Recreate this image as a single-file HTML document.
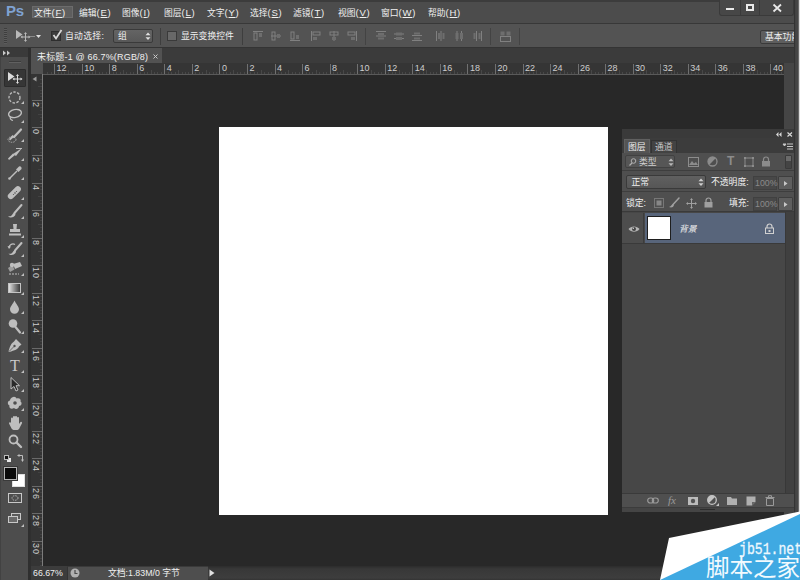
<!DOCTYPE html>
<html><head><meta charset="utf-8"><title>Photoshop</title>
<style>
*{margin:0;padding:0;box-sizing:border-box}
html,body{width:800px;height:580px;overflow:hidden;background:#282828}
body{position:relative;font-family:"Liberation Sans","Noto Sans CJK SC",sans-serif;font-size:8.8px;color:#f0f0f0}
.a{position:absolute}
.l{letter-spacing:0.7px;font-size:9.5px}
.t{position:absolute;white-space:nowrap;line-height:12px;height:12px}
.rl{font-size:9px;line-height:8px;height:8px;color:#cdcdcd}
.rv{writing-mode:vertical-rl;width:8px;height:auto;letter-spacing:1px}
svg{position:absolute;overflow:visible}
#menubar{left:0;top:0;width:800px;height:23px;background:#4c4c4c;border-top:2px solid #3c3c3c}
#optbar{left:0;top:23px;width:800px;height:25px;background:#535353;border-top:1px solid #383838;border-bottom:1px solid #343434}
#tabbar{left:31px;top:48px;width:769px;height:15px;background:#3b3b3b}
#tab{left:31px;top:48px;width:131px;height:15px;background:#525252}
#toolbar{left:0;top:48px;width:28px;height:532px;background:#4d4d4d;border-left:1px solid #424242}
#tbhead{left:0;top:48px;width:28px;height:9px;background:#3a3a3a}
#tbedge{left:28px;top:48px;width:3px;height:532px;background:#2f2f2f}
#rulert{left:31px;top:63px;width:753px;height:12px;background:#353535;border-bottom:1px solid #5a5a5a}
#rulerl{left:31px;top:63px;width:12px;height:503px;background:#343434;border-right:1px solid #7c7c7c}
#rcorner{left:31px;top:62px;width:12px;height:12px;background:#525252}
#doc{left:219px;top:127px;width:389px;height:388px;background:#fff}
#rightcol{left:784px;top:63px;width:10px;height:517px;background:#454545}
#frame{left:794px;top:0;width:6px;height:580px;background:linear-gradient(90deg,#333 0 1px,#424242 1px 2px,#454545 2px 4px,#6a6a6a 4px 5px,#dcdcdc 5px 6px)}
#status{left:31px;top:566px;width:753px;height:14px;background:linear-gradient(#2c2c2c 0,#383838 3px,#3d3d3d 12px,#343434 14px)}
#panel{left:622px;top:129px;width:172px;height:383px;background:#4b4b4b}
</style></head><body>
<div class="a" id="doc"></div>
<div class="a" id="menubar"></div>
<div class="a" id="optbar"></div>
<div class="a" id="tabbar"></div>
<div class="a" id="tab"></div>
<div class="a" id="rulert"></div>
<div class="a" id="rulerl"></div>
<div class="a" id="rcorner"></div>
<div class="a" id="rightcol"></div>
<div class="a" id="status"></div>
<div class="a" id="toolbar"></div>
<div class="a" id="tbhead"></div>
<div class="a" id="tbedge"></div>
<div class="t" style="left:6px;top:3px;font-size:15px;font-weight:bold;color:#7fa2d2;line-height:16px;height:16px;letter-spacing:-0.3px">Ps</div>
<div class="a" style="left:32px;top:6px;width:41px;height:12px;background:#5e5e5e;border:1px solid #6c6c6c"></div>
<div class="t" style="left:34px;top:7px">文件<span class="l">(<u>F</u>)</span></div>
<div class="t" style="left:79px;top:7px">编辑<span class="l">(<u>E</u>)</span></div>
<div class="t" style="left:122px;top:7px">图像<span class="l">(<u>I</u>)</span></div>
<div class="t" style="left:164px;top:7px">图层<span class="l">(<u>L</u>)</span></div>
<div class="t" style="left:207px;top:7px">文字<span class="l">(<u>Y</u>)</span></div>
<div class="t" style="left:250px;top:7px">选择<span class="l">(<u>S</u>)</span></div>
<div class="t" style="left:293px;top:7px">滤镜<span class="l">(<u>T</u>)</span></div>
<div class="t" style="left:338px;top:7px">视图<span class="l">(<u>V</u>)</span></div>
<div class="t" style="left:381px;top:7px">窗口<span class="l">(<u>W</u>)</span></div>
<div class="t" style="left:428px;top:7px">帮助<span class="l">(<u>H</u>)</span></div>
<div class="a" style="left:719px;top:0;width:75px;height:16px;background:#474747;border:1px solid #3a3a3a;border-top:none;border-radius:0 0 3px 3px"></div>
<div class="a" style="left:740px;top:0;width:1px;height:15px;background:#3a3a3a"></div>
<div class="a" style="left:759px;top:0;width:1px;height:15px;background:#3a3a3a"></div>
<div class="a" style="left:726px;top:8px;width:8px;height:2px;background:#e8e8e8"></div>
<div class="a" style="left:746px;top:4px;width:8px;height:7px;border:2px solid #e8e8e8;border-width:2px 2px 2px 2px"></div>
<svg style="left:773px;top:4px" width="9" height="8"><path d="M0.500 0.500L8 7.500M8 0.500L0.500 7.500" stroke="#e8e8e8" stroke-width="1.8" fill="none"/></svg>
<div class="a" style="left:4px;top:28px;width:3px;height:16px;background:repeating-linear-gradient(#3e3e3e 0 1px,#5c5c5c 1px 2px)"></div>
<svg style="left:16px;top:30px" width="16" height="12"><path d="M0 0L0 9L6.5 4.5Z" fill="#b8b8b8"/><path d="M9.5 3V11M5.5 7H13.5" stroke="#b8b8b8" stroke-width="1" fill="none"/><path d="M9.5 2L8 4H11ZM9.5 12L8 10H11ZM4.5 7L6.5 5.5V8.5ZM14.5 7L12.5 5.5V8.5Z" fill="#b8b8b8"/></svg>
<div class="a" style="left:30px;top:36px;width:5px;height:1px;background:#8a8a8a"></div>
<svg style="left:36px;top:35px" width="6" height="4"><path d="M0 0H5L2.5 3Z" fill="#e0e0e0"/></svg>
<div class="a" style="left:51px;top:31px;width:10px;height:10px;background:#3c3c3c;border:1px solid #2e2e2e"></div>
<svg style="left:51px;top:28px" width="13" height="13"><path d="M2.5 7L5 10.5L10.5 2" stroke="#d8d8d8" stroke-width="1.8" fill="none"/></svg>
<div class="t" style="left:65px;top:30px;letter-spacing:0.3px">自动选择:</div>
<div class="a" style="left:113px;top:29px;width:40px;height:14px;background:linear-gradient(#646464,#585858);border:1px solid #3a3a3a;border-radius:2px"></div>
<div class="t" style="left:118px;top:30px">组</div>
<svg style="left:145px;top:32px" width="6" height="9"><path d="M0.5 3.2H5.5L3 0.5ZM0.5 5.2H5.5L3 8Z" fill="#e0e0e0"/></svg>
<div class="a" style="left:160px;top:28px;width:1px;height:17px;background:#3e3e3e"></div>
<div class="a" style="left:167px;top:31px;width:10px;height:10px;background:#686868;border:1px solid #3a3a3a"></div>
<div class="t" style="left:181px;top:30px">显示变换控件</div>
<div class="a" style="left:242px;top:28px;width:1px;height:17px;background:#3e3e3e"></div>
<svg style="left:253px;top:30.5px" width="10" height="10"><path d="M0 0.5H10" stroke="#808080"/><rect x="1" y="2" width="3" height="7" fill="none" stroke="#808080"/><rect x="6" y="2" width="3" height="4" fill="#6e6e6e"/></svg>
<svg style="left:271px;top:30.5px" width="10" height="10"><path d="M0 5H10" stroke="#808080"/><rect x="1" y="1" width="3" height="8" fill="none" stroke="#808080"/><rect x="6" y="3" width="3" height="4" fill="#6e6e6e"/></svg>
<svg style="left:290px;top:30.5px" width="10" height="10"><path d="M0 9.5H10" stroke="#808080"/><rect x="1" y="1" width="3" height="7" fill="none" stroke="#808080"/><rect x="6" y="4" width="3" height="4" fill="#6e6e6e"/></svg>
<svg style="left:311px;top:30.5px" width="10" height="10"><path d="M0.5 0V10" stroke="#808080"/><rect x="2" y="1" width="7" height="3" fill="none" stroke="#808080"/><rect x="2" y="6" width="4" height="3" fill="#6e6e6e"/></svg>
<svg style="left:329px;top:30.5px" width="10" height="10"><path d="M5 0V10" stroke="#808080"/><rect x="1" y="1" width="8" height="3" fill="none" stroke="#808080"/><rect x="3" y="6" width="4" height="3" fill="#6e6e6e"/></svg>
<svg style="left:347px;top:30.5px" width="10" height="10"><path d="M9.5 0V10" stroke="#808080"/><rect x="1" y="1" width="7" height="3" fill="none" stroke="#808080"/><rect x="4" y="6" width="4" height="3" fill="#6e6e6e"/></svg>
<svg style="left:376px;top:30.5px" width="10" height="10"><path d="M0 0.5H10M0 5H10" stroke="#808080"/><rect x="2" y="2" width="6" height="2" fill="#6e6e6e"/><rect x="2" y="6.5" width="6" height="2" fill="#6e6e6e"/></svg>
<svg style="left:394px;top:30.5px" width="10" height="10"><path d="M0 3H10M0 7.5H10" stroke="#808080"/><rect x="2" y="1.5" width="6" height="3" fill="#6e6e6e"/><rect x="2" y="6" width="6" height="3" fill="#6e6e6e"/></svg>
<svg style="left:412px;top:30.5px" width="10" height="10"><path d="M0 4.5H10M0 9.5H10" stroke="#808080"/><rect x="2" y="1.5" width="6" height="2" fill="#6e6e6e"/><rect x="2" y="6.5" width="6" height="2" fill="#6e6e6e"/></svg>
<svg style="left:436px;top:30.5px" width="10" height="10"><path d="M0.5 0V10M5 0V10" stroke="#808080"/><rect x="2" y="2" width="2" height="6" fill="#6e6e6e"/><rect x="6.5" y="2" width="2" height="6" fill="#6e6e6e"/></svg>
<svg style="left:454px;top:30.5px" width="10" height="10"><path d="M3 0V10M7.5 0V10" stroke="#808080"/><rect x="1.5" y="2" width="3" height="6" fill="#6e6e6e"/><rect x="6" y="2" width="3" height="6" fill="#6e6e6e"/></svg>
<svg style="left:472px;top:30.5px" width="10" height="10"><path d="M4.5 0V10M9.5 0V10" stroke="#808080"/><rect x="1.5" y="2" width="2" height="6" fill="#6e6e6e"/><rect x="6.5" y="2" width="2" height="6" fill="#6e6e6e"/></svg>
<svg style="left:500px;top:30.5px" width="11" height="11"><rect x="0.5" y="0.5" width="4" height="4" fill="#6e6e6e"/><rect x="6.5" y="0.5" width="4" height="4" fill="#6e6e6e"/><rect x="0.5" y="5.5" width="10" height="5" fill="none" stroke="#808080"/></svg>
<div class="a" style="left:365px;top:28px;width:1px;height:17px;background:#434343"></div>
<div class="a" style="left:490px;top:28px;width:1px;height:17px;background:#434343"></div>
<div class="a" style="left:519px;top:28px;width:1px;height:17px;background:#434343"></div>
<div class="a" style="left:760px;top:30px;width:38px;height:14px;background:#5e5e5e;border:1px solid #3a3a3a;border-radius:2px 0 0 2px"></div>
<div class="t" style="left:765px;top:31px;width:29px;overflow:hidden">基本功能</div>
<div class="a" id="frame"></div>
<div class="t" style="left:37px;top:51px;font-size:9px;letter-spacing:0.17px">未标题-1 @ 66.7%(RGB/8)</div>
<svg style="left:153px;top:54px" width="5" height="5"><path d="M0.5 0.5L4.5 4.5M4.5 0.5L0.5 4.5" stroke="#c8c8c8" stroke-width="1" fill="none"/></svg>
<div class="a" style="left:47.2px;top:72px;width:1px;height:2px;background:#484848"></div>
<div class="a" style="left:50.7px;top:72px;width:1px;height:2px;background:#484848"></div>
<div class="a" style="left:54.1px;top:64px;width:1px;height:10px;background:#707070"></div>
<div class="t rl" style="left:56.6px;top:64px">12</div>
<div class="a" style="left:57.5px;top:72px;width:1px;height:2px;background:#484848"></div>
<div class="a" style="left:61.0px;top:72px;width:1px;height:2px;background:#484848"></div>
<div class="a" style="left:64.4px;top:72px;width:1px;height:2px;background:#484848"></div>
<div class="a" style="left:67.9px;top:70px;width:1px;height:4px;background:#484848"></div>
<div class="a" style="left:71.3px;top:72px;width:1px;height:2px;background:#484848"></div>
<div class="a" style="left:74.8px;top:72px;width:1px;height:2px;background:#484848"></div>
<div class="a" style="left:78.2px;top:72px;width:1px;height:2px;background:#484848"></div>
<div class="a" style="left:81.7px;top:64px;width:1px;height:10px;background:#707070"></div>
<div class="t rl" style="left:84.2px;top:64px">10</div>
<div class="a" style="left:85.1px;top:72px;width:1px;height:2px;background:#484848"></div>
<div class="a" style="left:88.5px;top:72px;width:1px;height:2px;background:#484848"></div>
<div class="a" style="left:92.0px;top:72px;width:1px;height:2px;background:#484848"></div>
<div class="a" style="left:95.4px;top:70px;width:1px;height:4px;background:#484848"></div>
<div class="a" style="left:98.9px;top:72px;width:1px;height:2px;background:#484848"></div>
<div class="a" style="left:102.3px;top:72px;width:1px;height:2px;background:#484848"></div>
<div class="a" style="left:105.8px;top:72px;width:1px;height:2px;background:#484848"></div>
<div class="a" style="left:109.2px;top:64px;width:1px;height:10px;background:#707070"></div>
<div class="t rl" style="left:111.7px;top:64px">8</div>
<div class="a" style="left:112.6px;top:72px;width:1px;height:2px;background:#484848"></div>
<div class="a" style="left:116.1px;top:72px;width:1px;height:2px;background:#484848"></div>
<div class="a" style="left:119.5px;top:72px;width:1px;height:2px;background:#484848"></div>
<div class="a" style="left:123.0px;top:70px;width:1px;height:4px;background:#484848"></div>
<div class="a" style="left:126.4px;top:72px;width:1px;height:2px;background:#484848"></div>
<div class="a" style="left:129.9px;top:72px;width:1px;height:2px;background:#484848"></div>
<div class="a" style="left:133.3px;top:72px;width:1px;height:2px;background:#484848"></div>
<div class="a" style="left:136.8px;top:64px;width:1px;height:10px;background:#707070"></div>
<div class="t rl" style="left:139.2px;top:64px">6</div>
<div class="a" style="left:140.2px;top:72px;width:1px;height:2px;background:#484848"></div>
<div class="a" style="left:143.6px;top:72px;width:1px;height:2px;background:#484848"></div>
<div class="a" style="left:147.1px;top:72px;width:1px;height:2px;background:#484848"></div>
<div class="a" style="left:150.5px;top:70px;width:1px;height:4px;background:#484848"></div>
<div class="a" style="left:154.0px;top:72px;width:1px;height:2px;background:#484848"></div>
<div class="a" style="left:157.4px;top:72px;width:1px;height:2px;background:#484848"></div>
<div class="a" style="left:160.9px;top:72px;width:1px;height:2px;background:#484848"></div>
<div class="a" style="left:164.3px;top:64px;width:1px;height:10px;background:#707070"></div>
<div class="t rl" style="left:166.8px;top:64px">4</div>
<div class="a" style="left:167.7px;top:72px;width:1px;height:2px;background:#484848"></div>
<div class="a" style="left:171.2px;top:72px;width:1px;height:2px;background:#484848"></div>
<div class="a" style="left:174.6px;top:72px;width:1px;height:2px;background:#484848"></div>
<div class="a" style="left:178.1px;top:70px;width:1px;height:4px;background:#484848"></div>
<div class="a" style="left:181.5px;top:72px;width:1px;height:2px;background:#484848"></div>
<div class="a" style="left:185.0px;top:72px;width:1px;height:2px;background:#484848"></div>
<div class="a" style="left:188.4px;top:72px;width:1px;height:2px;background:#484848"></div>
<div class="a" style="left:191.8px;top:64px;width:1px;height:10px;background:#707070"></div>
<div class="t rl" style="left:194.3px;top:64px">2</div>
<div class="a" style="left:195.3px;top:72px;width:1px;height:2px;background:#484848"></div>
<div class="a" style="left:198.7px;top:72px;width:1px;height:2px;background:#484848"></div>
<div class="a" style="left:202.2px;top:72px;width:1px;height:2px;background:#484848"></div>
<div class="a" style="left:205.6px;top:70px;width:1px;height:4px;background:#484848"></div>
<div class="a" style="left:209.1px;top:72px;width:1px;height:2px;background:#484848"></div>
<div class="a" style="left:212.5px;top:72px;width:1px;height:2px;background:#484848"></div>
<div class="a" style="left:216.0px;top:72px;width:1px;height:2px;background:#484848"></div>
<div class="a" style="left:219.4px;top:64px;width:1px;height:10px;background:#707070"></div>
<div class="t rl" style="left:221.9px;top:64px">0</div>
<div class="a" style="left:222.8px;top:72px;width:1px;height:2px;background:#484848"></div>
<div class="a" style="left:226.3px;top:72px;width:1px;height:2px;background:#484848"></div>
<div class="a" style="left:229.7px;top:72px;width:1px;height:2px;background:#484848"></div>
<div class="a" style="left:233.2px;top:70px;width:1px;height:4px;background:#484848"></div>
<div class="a" style="left:236.6px;top:72px;width:1px;height:2px;background:#484848"></div>
<div class="a" style="left:240.1px;top:72px;width:1px;height:2px;background:#484848"></div>
<div class="a" style="left:243.5px;top:72px;width:1px;height:2px;background:#484848"></div>
<div class="a" style="left:247.0px;top:64px;width:1px;height:10px;background:#707070"></div>
<div class="t rl" style="left:249.5px;top:64px">2</div>
<div class="a" style="left:250.4px;top:72px;width:1px;height:2px;background:#484848"></div>
<div class="a" style="left:253.8px;top:72px;width:1px;height:2px;background:#484848"></div>
<div class="a" style="left:257.3px;top:72px;width:1px;height:2px;background:#484848"></div>
<div class="a" style="left:260.7px;top:70px;width:1px;height:4px;background:#484848"></div>
<div class="a" style="left:264.2px;top:72px;width:1px;height:2px;background:#484848"></div>
<div class="a" style="left:267.6px;top:72px;width:1px;height:2px;background:#484848"></div>
<div class="a" style="left:271.1px;top:72px;width:1px;height:2px;background:#484848"></div>
<div class="a" style="left:274.5px;top:64px;width:1px;height:10px;background:#707070"></div>
<div class="t rl" style="left:277.0px;top:64px">4</div>
<div class="a" style="left:277.9px;top:72px;width:1px;height:2px;background:#484848"></div>
<div class="a" style="left:281.4px;top:72px;width:1px;height:2px;background:#484848"></div>
<div class="a" style="left:284.8px;top:72px;width:1px;height:2px;background:#484848"></div>
<div class="a" style="left:288.3px;top:70px;width:1px;height:4px;background:#484848"></div>
<div class="a" style="left:291.7px;top:72px;width:1px;height:2px;background:#484848"></div>
<div class="a" style="left:295.2px;top:72px;width:1px;height:2px;background:#484848"></div>
<div class="a" style="left:298.6px;top:72px;width:1px;height:2px;background:#484848"></div>
<div class="a" style="left:302.1px;top:64px;width:1px;height:10px;background:#707070"></div>
<div class="t rl" style="left:304.6px;top:64px">6</div>
<div class="a" style="left:305.5px;top:72px;width:1px;height:2px;background:#484848"></div>
<div class="a" style="left:308.9px;top:72px;width:1px;height:2px;background:#484848"></div>
<div class="a" style="left:312.4px;top:72px;width:1px;height:2px;background:#484848"></div>
<div class="a" style="left:315.8px;top:70px;width:1px;height:4px;background:#484848"></div>
<div class="a" style="left:319.3px;top:72px;width:1px;height:2px;background:#484848"></div>
<div class="a" style="left:322.7px;top:72px;width:1px;height:2px;background:#484848"></div>
<div class="a" style="left:326.2px;top:72px;width:1px;height:2px;background:#484848"></div>
<div class="a" style="left:329.6px;top:64px;width:1px;height:10px;background:#707070"></div>
<div class="t rl" style="left:332.1px;top:64px">8</div>
<div class="a" style="left:333.0px;top:72px;width:1px;height:2px;background:#484848"></div>
<div class="a" style="left:336.5px;top:72px;width:1px;height:2px;background:#484848"></div>
<div class="a" style="left:339.9px;top:72px;width:1px;height:2px;background:#484848"></div>
<div class="a" style="left:343.4px;top:70px;width:1px;height:4px;background:#484848"></div>
<div class="a" style="left:346.8px;top:72px;width:1px;height:2px;background:#484848"></div>
<div class="a" style="left:350.3px;top:72px;width:1px;height:2px;background:#484848"></div>
<div class="a" style="left:353.7px;top:72px;width:1px;height:2px;background:#484848"></div>
<div class="a" style="left:357.1px;top:64px;width:1px;height:10px;background:#707070"></div>
<div class="t rl" style="left:359.6px;top:64px">10</div>
<div class="a" style="left:360.6px;top:72px;width:1px;height:2px;background:#484848"></div>
<div class="a" style="left:364.0px;top:72px;width:1px;height:2px;background:#484848"></div>
<div class="a" style="left:367.5px;top:72px;width:1px;height:2px;background:#484848"></div>
<div class="a" style="left:370.9px;top:70px;width:1px;height:4px;background:#484848"></div>
<div class="a" style="left:374.4px;top:72px;width:1px;height:2px;background:#484848"></div>
<div class="a" style="left:377.8px;top:72px;width:1px;height:2px;background:#484848"></div>
<div class="a" style="left:381.3px;top:72px;width:1px;height:2px;background:#484848"></div>
<div class="a" style="left:384.7px;top:64px;width:1px;height:10px;background:#707070"></div>
<div class="t rl" style="left:387.2px;top:64px">12</div>
<div class="a" style="left:388.1px;top:72px;width:1px;height:2px;background:#484848"></div>
<div class="a" style="left:391.6px;top:72px;width:1px;height:2px;background:#484848"></div>
<div class="a" style="left:395.0px;top:72px;width:1px;height:2px;background:#484848"></div>
<div class="a" style="left:398.5px;top:70px;width:1px;height:4px;background:#484848"></div>
<div class="a" style="left:401.9px;top:72px;width:1px;height:2px;background:#484848"></div>
<div class="a" style="left:405.4px;top:72px;width:1px;height:2px;background:#484848"></div>
<div class="a" style="left:408.8px;top:72px;width:1px;height:2px;background:#484848"></div>
<div class="a" style="left:412.2px;top:64px;width:1px;height:10px;background:#707070"></div>
<div class="t rl" style="left:414.8px;top:64px">14</div>
<div class="a" style="left:415.7px;top:72px;width:1px;height:2px;background:#484848"></div>
<div class="a" style="left:419.1px;top:72px;width:1px;height:2px;background:#484848"></div>
<div class="a" style="left:422.6px;top:72px;width:1px;height:2px;background:#484848"></div>
<div class="a" style="left:426.0px;top:70px;width:1px;height:4px;background:#484848"></div>
<div class="a" style="left:429.5px;top:72px;width:1px;height:2px;background:#484848"></div>
<div class="a" style="left:432.9px;top:72px;width:1px;height:2px;background:#484848"></div>
<div class="a" style="left:436.4px;top:72px;width:1px;height:2px;background:#484848"></div>
<div class="a" style="left:439.8px;top:64px;width:1px;height:10px;background:#707070"></div>
<div class="t rl" style="left:442.3px;top:64px">16</div>
<div class="a" style="left:443.2px;top:72px;width:1px;height:2px;background:#484848"></div>
<div class="a" style="left:446.7px;top:72px;width:1px;height:2px;background:#484848"></div>
<div class="a" style="left:450.1px;top:72px;width:1px;height:2px;background:#484848"></div>
<div class="a" style="left:453.6px;top:70px;width:1px;height:4px;background:#484848"></div>
<div class="a" style="left:457.0px;top:72px;width:1px;height:2px;background:#484848"></div>
<div class="a" style="left:460.5px;top:72px;width:1px;height:2px;background:#484848"></div>
<div class="a" style="left:463.9px;top:72px;width:1px;height:2px;background:#484848"></div>
<div class="a" style="left:467.4px;top:64px;width:1px;height:10px;background:#707070"></div>
<div class="t rl" style="left:469.9px;top:64px">18</div>
<div class="a" style="left:470.8px;top:72px;width:1px;height:2px;background:#484848"></div>
<div class="a" style="left:474.2px;top:72px;width:1px;height:2px;background:#484848"></div>
<div class="a" style="left:477.7px;top:72px;width:1px;height:2px;background:#484848"></div>
<div class="a" style="left:481.1px;top:70px;width:1px;height:4px;background:#484848"></div>
<div class="a" style="left:484.6px;top:72px;width:1px;height:2px;background:#484848"></div>
<div class="a" style="left:488.0px;top:72px;width:1px;height:2px;background:#484848"></div>
<div class="a" style="left:491.5px;top:72px;width:1px;height:2px;background:#484848"></div>
<div class="a" style="left:494.9px;top:64px;width:1px;height:10px;background:#707070"></div>
<div class="t rl" style="left:497.4px;top:64px">20</div>
<div class="a" style="left:498.3px;top:72px;width:1px;height:2px;background:#484848"></div>
<div class="a" style="left:501.8px;top:72px;width:1px;height:2px;background:#484848"></div>
<div class="a" style="left:505.2px;top:72px;width:1px;height:2px;background:#484848"></div>
<div class="a" style="left:508.7px;top:70px;width:1px;height:4px;background:#484848"></div>
<div class="a" style="left:512.1px;top:72px;width:1px;height:2px;background:#484848"></div>
<div class="a" style="left:515.6px;top:72px;width:1px;height:2px;background:#484848"></div>
<div class="a" style="left:519.0px;top:72px;width:1px;height:2px;background:#484848"></div>
<div class="a" style="left:522.5px;top:64px;width:1px;height:10px;background:#707070"></div>
<div class="t rl" style="left:525.0px;top:64px">22</div>
<div class="a" style="left:525.9px;top:72px;width:1px;height:2px;background:#484848"></div>
<div class="a" style="left:529.3px;top:72px;width:1px;height:2px;background:#484848"></div>
<div class="a" style="left:532.8px;top:72px;width:1px;height:2px;background:#484848"></div>
<div class="a" style="left:536.2px;top:70px;width:1px;height:4px;background:#484848"></div>
<div class="a" style="left:539.7px;top:72px;width:1px;height:2px;background:#484848"></div>
<div class="a" style="left:543.1px;top:72px;width:1px;height:2px;background:#484848"></div>
<div class="a" style="left:546.6px;top:72px;width:1px;height:2px;background:#484848"></div>
<div class="a" style="left:550.0px;top:64px;width:1px;height:10px;background:#707070"></div>
<div class="t rl" style="left:552.5px;top:64px">24</div>
<div class="a" style="left:553.4px;top:72px;width:1px;height:2px;background:#484848"></div>
<div class="a" style="left:556.9px;top:72px;width:1px;height:2px;background:#484848"></div>
<div class="a" style="left:560.3px;top:72px;width:1px;height:2px;background:#484848"></div>
<div class="a" style="left:563.8px;top:70px;width:1px;height:4px;background:#484848"></div>
<div class="a" style="left:567.2px;top:72px;width:1px;height:2px;background:#484848"></div>
<div class="a" style="left:570.7px;top:72px;width:1px;height:2px;background:#484848"></div>
<div class="a" style="left:574.1px;top:72px;width:1px;height:2px;background:#484848"></div>
<div class="a" style="left:577.6px;top:64px;width:1px;height:10px;background:#707070"></div>
<div class="t rl" style="left:580.1px;top:64px">26</div>
<div class="a" style="left:581.0px;top:72px;width:1px;height:2px;background:#484848"></div>
<div class="a" style="left:584.4px;top:72px;width:1px;height:2px;background:#484848"></div>
<div class="a" style="left:587.9px;top:72px;width:1px;height:2px;background:#484848"></div>
<div class="a" style="left:591.3px;top:70px;width:1px;height:4px;background:#484848"></div>
<div class="a" style="left:594.8px;top:72px;width:1px;height:2px;background:#484848"></div>
<div class="a" style="left:598.2px;top:72px;width:1px;height:2px;background:#484848"></div>
<div class="a" style="left:601.7px;top:72px;width:1px;height:2px;background:#484848"></div>
<div class="a" style="left:605.1px;top:64px;width:1px;height:10px;background:#707070"></div>
<div class="t rl" style="left:607.6px;top:64px">28</div>
<div class="a" style="left:608.5px;top:72px;width:1px;height:2px;background:#484848"></div>
<div class="a" style="left:612.0px;top:72px;width:1px;height:2px;background:#484848"></div>
<div class="a" style="left:615.4px;top:72px;width:1px;height:2px;background:#484848"></div>
<div class="a" style="left:618.9px;top:70px;width:1px;height:4px;background:#484848"></div>
<div class="a" style="left:622.3px;top:72px;width:1px;height:2px;background:#484848"></div>
<div class="a" style="left:625.8px;top:72px;width:1px;height:2px;background:#484848"></div>
<div class="a" style="left:629.2px;top:72px;width:1px;height:2px;background:#484848"></div>
<div class="a" style="left:632.6px;top:64px;width:1px;height:10px;background:#707070"></div>
<div class="t rl" style="left:635.1px;top:64px">30</div>
<div class="a" style="left:636.1px;top:72px;width:1px;height:2px;background:#484848"></div>
<div class="a" style="left:639.5px;top:72px;width:1px;height:2px;background:#484848"></div>
<div class="a" style="left:643.0px;top:72px;width:1px;height:2px;background:#484848"></div>
<div class="a" style="left:646.4px;top:70px;width:1px;height:4px;background:#484848"></div>
<div class="a" style="left:649.9px;top:72px;width:1px;height:2px;background:#484848"></div>
<div class="a" style="left:653.3px;top:72px;width:1px;height:2px;background:#484848"></div>
<div class="a" style="left:656.8px;top:72px;width:1px;height:2px;background:#484848"></div>
<div class="a" style="left:660.2px;top:64px;width:1px;height:10px;background:#707070"></div>
<div class="t rl" style="left:662.7px;top:64px">32</div>
<div class="a" style="left:663.6px;top:72px;width:1px;height:2px;background:#484848"></div>
<div class="a" style="left:667.1px;top:72px;width:1px;height:2px;background:#484848"></div>
<div class="a" style="left:670.5px;top:72px;width:1px;height:2px;background:#484848"></div>
<div class="a" style="left:674.0px;top:70px;width:1px;height:4px;background:#484848"></div>
<div class="a" style="left:677.4px;top:72px;width:1px;height:2px;background:#484848"></div>
<div class="a" style="left:680.9px;top:72px;width:1px;height:2px;background:#484848"></div>
<div class="a" style="left:684.3px;top:72px;width:1px;height:2px;background:#484848"></div>
<div class="a" style="left:687.8px;top:64px;width:1px;height:10px;background:#707070"></div>
<div class="t rl" style="left:690.2px;top:64px">34</div>
<div class="a" style="left:691.2px;top:72px;width:1px;height:2px;background:#484848"></div>
<div class="a" style="left:694.6px;top:72px;width:1px;height:2px;background:#484848"></div>
<div class="a" style="left:698.1px;top:72px;width:1px;height:2px;background:#484848"></div>
<div class="a" style="left:701.5px;top:70px;width:1px;height:4px;background:#484848"></div>
<div class="a" style="left:705.0px;top:72px;width:1px;height:2px;background:#484848"></div>
<div class="a" style="left:708.4px;top:72px;width:1px;height:2px;background:#484848"></div>
<div class="a" style="left:711.9px;top:72px;width:1px;height:2px;background:#484848"></div>
<div class="a" style="left:715.3px;top:64px;width:1px;height:10px;background:#707070"></div>
<div class="t rl" style="left:717.8px;top:64px">36</div>
<div class="a" style="left:718.7px;top:72px;width:1px;height:2px;background:#484848"></div>
<div class="a" style="left:722.2px;top:72px;width:1px;height:2px;background:#484848"></div>
<div class="a" style="left:725.6px;top:72px;width:1px;height:2px;background:#484848"></div>
<div class="a" style="left:729.1px;top:70px;width:1px;height:4px;background:#484848"></div>
<div class="a" style="left:732.5px;top:72px;width:1px;height:2px;background:#484848"></div>
<div class="a" style="left:736.0px;top:72px;width:1px;height:2px;background:#484848"></div>
<div class="a" style="left:739.4px;top:72px;width:1px;height:2px;background:#484848"></div>
<div class="a" style="left:742.9px;top:64px;width:1px;height:10px;background:#707070"></div>
<div class="t rl" style="left:745.4px;top:64px">38</div>
<div class="a" style="left:746.3px;top:72px;width:1px;height:2px;background:#484848"></div>
<div class="a" style="left:749.7px;top:72px;width:1px;height:2px;background:#484848"></div>
<div class="a" style="left:753.2px;top:72px;width:1px;height:2px;background:#484848"></div>
<div class="a" style="left:756.6px;top:70px;width:1px;height:4px;background:#484848"></div>
<div class="a" style="left:760.1px;top:72px;width:1px;height:2px;background:#484848"></div>
<div class="a" style="left:763.5px;top:72px;width:1px;height:2px;background:#484848"></div>
<div class="a" style="left:767.0px;top:72px;width:1px;height:2px;background:#484848"></div>
<div class="a" style="left:770.4px;top:64px;width:1px;height:10px;background:#707070"></div>
<div class="t rl" style="left:772.9px;top:64px">40</div>
<div class="a" style="left:773.8px;top:72px;width:1px;height:2px;background:#484848"></div>
<div class="a" style="left:777.3px;top:72px;width:1px;height:2px;background:#484848"></div>
<div class="a" style="left:780.7px;top:72px;width:1px;height:2px;background:#484848"></div>
<div class="a" style="left:40px;top:79.2px;width:2px;height:1px;background:#424242"></div>
<div class="a" style="left:40px;top:82.6px;width:2px;height:1px;background:#424242"></div>
<div class="a" style="left:38px;top:86.1px;width:4px;height:1px;background:#424242"></div>
<div class="a" style="left:40px;top:89.5px;width:2px;height:1px;background:#424242"></div>
<div class="a" style="left:40px;top:93.0px;width:2px;height:1px;background:#424242"></div>
<div class="a" style="left:40px;top:96.4px;width:2px;height:1px;background:#424242"></div>
<div class="a" style="left:32px;top:99.9px;width:10px;height:1px;background:#6a6a6a"></div>
<div class="t rl rv" style="left:32px;top:101.9px">2</div>
<div class="a" style="left:40px;top:103.3px;width:2px;height:1px;background:#424242"></div>
<div class="a" style="left:40px;top:106.7px;width:2px;height:1px;background:#424242"></div>
<div class="a" style="left:40px;top:110.2px;width:2px;height:1px;background:#424242"></div>
<div class="a" style="left:38px;top:113.6px;width:4px;height:1px;background:#424242"></div>
<div class="a" style="left:40px;top:117.1px;width:2px;height:1px;background:#424242"></div>
<div class="a" style="left:40px;top:120.5px;width:2px;height:1px;background:#424242"></div>
<div class="a" style="left:40px;top:124.0px;width:2px;height:1px;background:#424242"></div>
<div class="a" style="left:32px;top:127.4px;width:10px;height:1px;background:#6a6a6a"></div>
<div class="t rl rv" style="left:32px;top:129.4px">0</div>
<div class="a" style="left:40px;top:130.8px;width:2px;height:1px;background:#424242"></div>
<div class="a" style="left:40px;top:134.3px;width:2px;height:1px;background:#424242"></div>
<div class="a" style="left:40px;top:137.7px;width:2px;height:1px;background:#424242"></div>
<div class="a" style="left:38px;top:141.2px;width:4px;height:1px;background:#424242"></div>
<div class="a" style="left:40px;top:144.6px;width:2px;height:1px;background:#424242"></div>
<div class="a" style="left:40px;top:148.1px;width:2px;height:1px;background:#424242"></div>
<div class="a" style="left:40px;top:151.5px;width:2px;height:1px;background:#424242"></div>
<div class="a" style="left:32px;top:155.0px;width:10px;height:1px;background:#6a6a6a"></div>
<div class="t rl rv" style="left:32px;top:157.0px">2</div>
<div class="a" style="left:40px;top:158.4px;width:2px;height:1px;background:#424242"></div>
<div class="a" style="left:40px;top:161.8px;width:2px;height:1px;background:#424242"></div>
<div class="a" style="left:40px;top:165.3px;width:2px;height:1px;background:#424242"></div>
<div class="a" style="left:38px;top:168.7px;width:4px;height:1px;background:#424242"></div>
<div class="a" style="left:40px;top:172.2px;width:2px;height:1px;background:#424242"></div>
<div class="a" style="left:40px;top:175.6px;width:2px;height:1px;background:#424242"></div>
<div class="a" style="left:40px;top:179.1px;width:2px;height:1px;background:#424242"></div>
<div class="a" style="left:32px;top:182.5px;width:10px;height:1px;background:#6a6a6a"></div>
<div class="t rl rv" style="left:32px;top:184.5px">4</div>
<div class="a" style="left:40px;top:185.9px;width:2px;height:1px;background:#424242"></div>
<div class="a" style="left:40px;top:189.4px;width:2px;height:1px;background:#424242"></div>
<div class="a" style="left:40px;top:192.8px;width:2px;height:1px;background:#424242"></div>
<div class="a" style="left:38px;top:196.3px;width:4px;height:1px;background:#424242"></div>
<div class="a" style="left:40px;top:199.7px;width:2px;height:1px;background:#424242"></div>
<div class="a" style="left:40px;top:203.2px;width:2px;height:1px;background:#424242"></div>
<div class="a" style="left:40px;top:206.6px;width:2px;height:1px;background:#424242"></div>
<div class="a" style="left:32px;top:210.1px;width:10px;height:1px;background:#6a6a6a"></div>
<div class="t rl rv" style="left:32px;top:212.1px">6</div>
<div class="a" style="left:40px;top:213.5px;width:2px;height:1px;background:#424242"></div>
<div class="a" style="left:40px;top:216.9px;width:2px;height:1px;background:#424242"></div>
<div class="a" style="left:40px;top:220.4px;width:2px;height:1px;background:#424242"></div>
<div class="a" style="left:38px;top:223.8px;width:4px;height:1px;background:#424242"></div>
<div class="a" style="left:40px;top:227.3px;width:2px;height:1px;background:#424242"></div>
<div class="a" style="left:40px;top:230.7px;width:2px;height:1px;background:#424242"></div>
<div class="a" style="left:40px;top:234.2px;width:2px;height:1px;background:#424242"></div>
<div class="a" style="left:32px;top:237.6px;width:10px;height:1px;background:#6a6a6a"></div>
<div class="t rl rv" style="left:32px;top:239.6px">8</div>
<div class="a" style="left:40px;top:241.0px;width:2px;height:1px;background:#424242"></div>
<div class="a" style="left:40px;top:244.5px;width:2px;height:1px;background:#424242"></div>
<div class="a" style="left:40px;top:247.9px;width:2px;height:1px;background:#424242"></div>
<div class="a" style="left:38px;top:251.4px;width:4px;height:1px;background:#424242"></div>
<div class="a" style="left:40px;top:254.8px;width:2px;height:1px;background:#424242"></div>
<div class="a" style="left:40px;top:258.3px;width:2px;height:1px;background:#424242"></div>
<div class="a" style="left:40px;top:261.7px;width:2px;height:1px;background:#424242"></div>
<div class="a" style="left:32px;top:265.1px;width:10px;height:1px;background:#6a6a6a"></div>
<div class="t rl rv" style="left:32px;top:267.1px">10</div>
<div class="a" style="left:40px;top:268.6px;width:2px;height:1px;background:#424242"></div>
<div class="a" style="left:40px;top:272.0px;width:2px;height:1px;background:#424242"></div>
<div class="a" style="left:40px;top:275.5px;width:2px;height:1px;background:#424242"></div>
<div class="a" style="left:38px;top:278.9px;width:4px;height:1px;background:#424242"></div>
<div class="a" style="left:40px;top:282.4px;width:2px;height:1px;background:#424242"></div>
<div class="a" style="left:40px;top:285.8px;width:2px;height:1px;background:#424242"></div>
<div class="a" style="left:40px;top:289.3px;width:2px;height:1px;background:#424242"></div>
<div class="a" style="left:32px;top:292.7px;width:10px;height:1px;background:#6a6a6a"></div>
<div class="t rl rv" style="left:32px;top:294.7px">12</div>
<div class="a" style="left:40px;top:296.1px;width:2px;height:1px;background:#424242"></div>
<div class="a" style="left:40px;top:299.6px;width:2px;height:1px;background:#424242"></div>
<div class="a" style="left:40px;top:303.0px;width:2px;height:1px;background:#424242"></div>
<div class="a" style="left:38px;top:306.5px;width:4px;height:1px;background:#424242"></div>
<div class="a" style="left:40px;top:309.9px;width:2px;height:1px;background:#424242"></div>
<div class="a" style="left:40px;top:313.4px;width:2px;height:1px;background:#424242"></div>
<div class="a" style="left:40px;top:316.8px;width:2px;height:1px;background:#424242"></div>
<div class="a" style="left:32px;top:320.2px;width:10px;height:1px;background:#6a6a6a"></div>
<div class="t rl rv" style="left:32px;top:322.2px">14</div>
<div class="a" style="left:40px;top:323.7px;width:2px;height:1px;background:#424242"></div>
<div class="a" style="left:40px;top:327.1px;width:2px;height:1px;background:#424242"></div>
<div class="a" style="left:40px;top:330.6px;width:2px;height:1px;background:#424242"></div>
<div class="a" style="left:38px;top:334.0px;width:4px;height:1px;background:#424242"></div>
<div class="a" style="left:40px;top:337.5px;width:2px;height:1px;background:#424242"></div>
<div class="a" style="left:40px;top:340.9px;width:2px;height:1px;background:#424242"></div>
<div class="a" style="left:40px;top:344.4px;width:2px;height:1px;background:#424242"></div>
<div class="a" style="left:32px;top:347.8px;width:10px;height:1px;background:#6a6a6a"></div>
<div class="t rl rv" style="left:32px;top:349.8px">16</div>
<div class="a" style="left:40px;top:351.2px;width:2px;height:1px;background:#424242"></div>
<div class="a" style="left:40px;top:354.7px;width:2px;height:1px;background:#424242"></div>
<div class="a" style="left:40px;top:358.1px;width:2px;height:1px;background:#424242"></div>
<div class="a" style="left:38px;top:361.6px;width:4px;height:1px;background:#424242"></div>
<div class="a" style="left:40px;top:365.0px;width:2px;height:1px;background:#424242"></div>
<div class="a" style="left:40px;top:368.5px;width:2px;height:1px;background:#424242"></div>
<div class="a" style="left:40px;top:371.9px;width:2px;height:1px;background:#424242"></div>
<div class="a" style="left:32px;top:375.4px;width:10px;height:1px;background:#6a6a6a"></div>
<div class="t rl rv" style="left:32px;top:377.4px">18</div>
<div class="a" style="left:40px;top:378.8px;width:2px;height:1px;background:#424242"></div>
<div class="a" style="left:40px;top:382.2px;width:2px;height:1px;background:#424242"></div>
<div class="a" style="left:40px;top:385.7px;width:2px;height:1px;background:#424242"></div>
<div class="a" style="left:38px;top:389.1px;width:4px;height:1px;background:#424242"></div>
<div class="a" style="left:40px;top:392.6px;width:2px;height:1px;background:#424242"></div>
<div class="a" style="left:40px;top:396.0px;width:2px;height:1px;background:#424242"></div>
<div class="a" style="left:40px;top:399.5px;width:2px;height:1px;background:#424242"></div>
<div class="a" style="left:32px;top:402.9px;width:10px;height:1px;background:#6a6a6a"></div>
<div class="t rl rv" style="left:32px;top:404.9px">20</div>
<div class="a" style="left:40px;top:406.3px;width:2px;height:1px;background:#424242"></div>
<div class="a" style="left:40px;top:409.8px;width:2px;height:1px;background:#424242"></div>
<div class="a" style="left:40px;top:413.2px;width:2px;height:1px;background:#424242"></div>
<div class="a" style="left:38px;top:416.7px;width:4px;height:1px;background:#424242"></div>
<div class="a" style="left:40px;top:420.1px;width:2px;height:1px;background:#424242"></div>
<div class="a" style="left:40px;top:423.6px;width:2px;height:1px;background:#424242"></div>
<div class="a" style="left:40px;top:427.0px;width:2px;height:1px;background:#424242"></div>
<div class="a" style="left:32px;top:430.5px;width:10px;height:1px;background:#6a6a6a"></div>
<div class="t rl rv" style="left:32px;top:432.5px">22</div>
<div class="a" style="left:40px;top:433.9px;width:2px;height:1px;background:#424242"></div>
<div class="a" style="left:40px;top:437.3px;width:2px;height:1px;background:#424242"></div>
<div class="a" style="left:40px;top:440.8px;width:2px;height:1px;background:#424242"></div>
<div class="a" style="left:38px;top:444.2px;width:4px;height:1px;background:#424242"></div>
<div class="a" style="left:40px;top:447.7px;width:2px;height:1px;background:#424242"></div>
<div class="a" style="left:40px;top:451.1px;width:2px;height:1px;background:#424242"></div>
<div class="a" style="left:40px;top:454.6px;width:2px;height:1px;background:#424242"></div>
<div class="a" style="left:32px;top:458.0px;width:10px;height:1px;background:#6a6a6a"></div>
<div class="t rl rv" style="left:32px;top:460.0px">24</div>
<div class="a" style="left:40px;top:461.4px;width:2px;height:1px;background:#424242"></div>
<div class="a" style="left:40px;top:464.9px;width:2px;height:1px;background:#424242"></div>
<div class="a" style="left:40px;top:468.3px;width:2px;height:1px;background:#424242"></div>
<div class="a" style="left:38px;top:471.8px;width:4px;height:1px;background:#424242"></div>
<div class="a" style="left:40px;top:475.2px;width:2px;height:1px;background:#424242"></div>
<div class="a" style="left:40px;top:478.7px;width:2px;height:1px;background:#424242"></div>
<div class="a" style="left:40px;top:482.1px;width:2px;height:1px;background:#424242"></div>
<div class="a" style="left:32px;top:485.6px;width:10px;height:1px;background:#6a6a6a"></div>
<div class="t rl rv" style="left:32px;top:487.6px">26</div>
<div class="a" style="left:40px;top:489.0px;width:2px;height:1px;background:#424242"></div>
<div class="a" style="left:40px;top:492.4px;width:2px;height:1px;background:#424242"></div>
<div class="a" style="left:40px;top:495.9px;width:2px;height:1px;background:#424242"></div>
<div class="a" style="left:38px;top:499.3px;width:4px;height:1px;background:#424242"></div>
<div class="a" style="left:40px;top:502.8px;width:2px;height:1px;background:#424242"></div>
<div class="a" style="left:40px;top:506.2px;width:2px;height:1px;background:#424242"></div>
<div class="a" style="left:40px;top:509.7px;width:2px;height:1px;background:#424242"></div>
<div class="a" style="left:32px;top:513.1px;width:10px;height:1px;background:#6a6a6a"></div>
<div class="t rl rv" style="left:32px;top:515.1px">28</div>
<div class="a" style="left:40px;top:516.5px;width:2px;height:1px;background:#424242"></div>
<div class="a" style="left:40px;top:520.0px;width:2px;height:1px;background:#424242"></div>
<div class="a" style="left:40px;top:523.4px;width:2px;height:1px;background:#424242"></div>
<div class="a" style="left:38px;top:526.9px;width:4px;height:1px;background:#424242"></div>
<div class="a" style="left:40px;top:530.3px;width:2px;height:1px;background:#424242"></div>
<div class="a" style="left:40px;top:533.8px;width:2px;height:1px;background:#424242"></div>
<div class="a" style="left:40px;top:537.2px;width:2px;height:1px;background:#424242"></div>
<div class="a" style="left:32px;top:540.6px;width:10px;height:1px;background:#6a6a6a"></div>
<div class="t rl rv" style="left:32px;top:542.6px">30</div>
<div class="a" style="left:40px;top:544.1px;width:2px;height:1px;background:#424242"></div>
<div class="a" style="left:40px;top:547.5px;width:2px;height:1px;background:#424242"></div>
<div class="a" style="left:40px;top:551.0px;width:2px;height:1px;background:#424242"></div>
<div class="a" style="left:38px;top:554.4px;width:4px;height:1px;background:#424242"></div>
<div class="a" style="left:40px;top:557.9px;width:2px;height:1px;background:#424242"></div>
<div class="a" style="left:40px;top:561.3px;width:2px;height:1px;background:#424242"></div>
<div class="a" style="left:40px;top:564.8px;width:2px;height:1px;background:#424242"></div>
<svg style="left:32px;top:76px" width="5" height="6"><path d="M4.5 0.5V5.5L0.5 3Z" fill="#9a9a9a"/></svg>
<svg style="left:3px;top:50px" width="8" height="6"><path d="M0 0.5L3 3L0 5.5ZM4 0.5L7 3L4 5.5Z" fill="#c8c8c8"/></svg>
<div class="a" style="left:9px;top:61px;width:12px;height:1px;background:#3c3c3c"></div>
<div class="a" style="left:9px;top:62px;width:12px;height:1px;background:#606060"></div>
<div class="a" style="left:4px;top:69px;width:22px;height:18px;background:#363636;border:1px solid #2c2c2c;border-radius:1px"></div>
<svg style="left:8px;top:72px" width="16" height="12"><path d="M0 0L0 9L6.5 4.5Z" fill="#dcdcdc"/><path d="M9.5 3V11M5.5 7H13.5" stroke="#dcdcdc" stroke-width="1" fill="none"/><path d="M9.5 2L8 4H11ZM9.5 12L8 10H11ZM4.5 7L6.5 5.5V8.5ZM14.5 7L12.5 5.5V8.5Z" fill="#dcdcdc"/></svg>
<svg style="left:8px;top:91px" width="13" height="13" viewBox="0 0 13 13"><ellipse cx="6.5" cy="6.5" rx="5.5" ry="5.5" fill="none" stroke="#bebebe" stroke-width="1.3" stroke-dasharray="2.5 1.5"/></svg>
<svg style="left:21px;top:101px" width="3" height="3"><path d="M3 0V3H0Z" fill="#c0c0c0"/></svg>
<svg style="left:7px;top:108px" width="16" height="14" viewBox="0 0 16 14"><ellipse cx="8" cy="5.5" rx="6.5" ry="4" fill="none" stroke="#bebebe" stroke-width="1.4" transform="rotate(-12 8 5.5)"/><path d="M3.5 8.5C2.5 10.5 4 12 6 12.5" fill="none" stroke="#bebebe" stroke-width="1.2"/></svg>
<svg style="left:21px;top:120px" width="3" height="3"><path d="M3 0V3H0Z" fill="#c0c0c0"/></svg>
<svg style="left:7px;top:127.5px" width="16" height="16" viewBox="0 0 16 16"><path d="M14 1.500L7 9" stroke="#bebebe" stroke-width="2.2" stroke-linecap="round"/><path d="M7.5 8.5L3 12.5L2 11L5.5 7Z" fill="#bebebe"/><ellipse cx="5" cy="11.5" rx="4" ry="2.8" fill="none" stroke="#bebebe" stroke-width="0.8" stroke-dasharray="1.5 1"/></svg>
<svg style="left:21px;top:139px" width="3" height="3"><path d="M3 0V3H0Z" fill="#c0c0c0"/></svg>
<svg style="left:7px;top:147px" width="16" height="15" viewBox="0 0 16 15"><path d="M15 1L9 9L6 7Z" fill="#bebebe"/><path d="M8 8L2 13L1 11.5L6 6.5Z" fill="#bebebe"/><path d="M9 1H15V2H9Z" fill="#bebebe"/></svg>
<svg style="left:21px;top:158px" width="3" height="3"><path d="M3 0V3H0Z" fill="#c0c0c0"/></svg>
<svg style="left:7px;top:165px" width="16" height="15" viewBox="0 0 16 15"><path d="M13.5 1.5C15 2.5 15 4 13.5 5L11.5 7L9 4.5L11 2.5C12 1.3 12.8 1 13.5 1.5Z" fill="#bebebe"/><path d="M10.5 6.5L4 13L2 14L3 12L9.5 5.5Z" fill="#bebebe"/><circle cx="2.5" cy="13.5" r="1.3" fill="#bebebe"/></svg>
<svg style="left:21px;top:177px" width="3" height="3"><path d="M3 0V3H0Z" fill="#c0c0c0"/></svg>
<svg style="left:7px;top:185px" width="16" height="16" viewBox="0 0 16 16"><rect x="-2" y="5" width="16" height="6" rx="3" transform="rotate(-45 7 8) translate(1.5 0)" fill="#bebebe"/><circle cx="8" cy="8" r="0.8" fill="#555"/><circle cx="6.5" cy="9.5" r="0.6" fill="#555"/><circle cx="9.5" cy="6.5" r="0.6" fill="#555"/></svg>
<svg style="left:21px;top:197px" width="3" height="3"><path d="M3 0V3H0Z" fill="#c0c0c0"/></svg>
<svg style="left:7px;top:204px" width="16" height="16" viewBox="0 0 16 16"><path d="M14.5 1L7.5 9" stroke="#bebebe" stroke-width="2" stroke-linecap="round"/><path d="M7.5 8.5C6 9 5.5 10.5 4.5 11.5C3.5 12.5 2 12.5 1 12C3 14.5 6.5 13.5 8 11.5C8.8 10.5 8.5 9.2 7.5 8.5Z" fill="#bebebe"/></svg>
<svg style="left:21px;top:216px" width="3" height="3"><path d="M3 0V3H0Z" fill="#c0c0c0"/></svg>
<svg style="left:8px;top:223px" width="14" height="15" viewBox="0 0 14 15"><path d="M5 1H9L8.5 6H12V9H2V6H5.5Z" fill="#bebebe"/><rect x="1" y="10.5" width="12" height="2" fill="#bebebe"/></svg>
<svg style="left:21px;top:235px" width="3" height="3"><path d="M3 0V3H0Z" fill="#c0c0c0"/></svg>
<svg style="left:7px;top:242px" width="16" height="16" viewBox="0 0 16 16"><path d="M14.5 1L8 8.5" stroke="#bebebe" stroke-width="2" stroke-linecap="round"/><path d="M8 8C6.5 8.5 6 10 5 11C4 12 2.5 12 1.5 11.5C3.5 14 7 13 8.5 11C9.3 10 9 8.7 8 8Z" fill="#bebebe"/><path d="M2 5.5A4 4 0 0 1 8 2.5" fill="none" stroke="#bebebe" stroke-width="1.2"/><path d="M0.5 4L2 7L4 4.5Z" fill="#bebebe"/></svg>
<svg style="left:21px;top:254px" width="3" height="3"><path d="M3 0V3H0Z" fill="#c0c0c0"/></svg>
<svg style="left:7px;top:261px" width="16" height="16" viewBox="0 0 16 16"><path d="M6 3L13 1L15 5L8 8Z" fill="#bebebe"/><path d="M5.5 4L7.5 8.5L3 11L1 7Z" fill="#9c9c9c"/><path d="M2 13H12" stroke="#bebebe" stroke-width="1" stroke-dasharray="2 1"/><circle cx="5" cy="4" r="2.2" fill="#bebebe"/></svg>
<svg style="left:21px;top:273px" width="3" height="3"><path d="M3 0V3H0Z" fill="#c0c0c0"/></svg>
<div class="a" style="left:8px;top:283px;width:13px;height:10px;border:1px solid #c4c4c4;background:linear-gradient(90deg,#e0e0e0,#3a3a3a)"></div>
<svg style="left:21px;top:292px" width="3" height="3"><path d="M3 0V3H0Z" fill="#c0c0c0"/></svg>
<svg style="left:9px;top:300px" width="11" height="14" viewBox="0 0 11 14"><path d="M5.5 0.5C7 4 10 6.5 10 9.2A4.5 4.5 0 0 1 1 9.2C1 6.5 4 4 5.5 0.5Z" fill="#bebebe"/></svg>
<svg style="left:21px;top:311px" width="3" height="3"><path d="M3 0V3H0Z" fill="#c0c0c0"/></svg>
<svg style="left:7px;top:318px" width="16" height="16" viewBox="0 0 16 16"><circle cx="6" cy="5.5" r="4.3" fill="#bebebe"/><path d="M8.5 9L13 14.5" stroke="#bebebe" stroke-width="2.2" stroke-linecap="round"/></svg>
<svg style="left:21px;top:331px" width="3" height="3"><path d="M3 0V3H0Z" fill="#c0c0c0"/></svg>
<svg style="left:7px;top:338px" width="16" height="16" viewBox="0 0 16 16"><path d="M9 1L14.5 6.5L12 8.5C11 11 8 12.5 2 14L1.5 13.5C3 8 4.5 5 7 3.5Z" fill="#bebebe"/><circle cx="7.5" cy="8" r="1.2" fill="#4f4f4f"/><path d="M2 13.5L7 8.5" stroke="#4f4f4f" stroke-width="0.8"/></svg>
<svg style="left:21px;top:350px" width="3" height="3"><path d="M3 0V3H0Z" fill="#c0c0c0"/></svg>
<div class="t" style="left:10px;top:357px;font-family:'Liberation Serif',serif;font-size:16px;line-height:17px;height:17px;color:#c8c8c8">T</div>
<svg style="left:21px;top:370px" width="3" height="3"><path d="M3 0V3H0Z" fill="#c0c0c0"/></svg>
<svg style="left:10px;top:377px" width="10" height="15" viewBox="0 0 10 15"><path d="M1 0.5V12L4 9.5L6 14L8 13L6 8.7H9.5Z" fill="#2a2a2a" stroke="#bebebe" stroke-width="1"/></svg>
<svg style="left:21px;top:389px" width="3" height="3"><path d="M3 0V3H0Z" fill="#c0c0c0"/></svg>
<svg style="left:7px;top:396px" width="16" height="15" viewBox="0 0 16 15"><path d="M5 1.5C7 0 9 1 9.5 2.5C12 1.5 14.5 3 13.5 5.5C15.5 7 14.5 10 12 10C12 12.5 9 14 7 12C4.5 14 1.5 12 2.5 9.5C0 8.5 0.5 4.5 3 4.5C3 3 4 2 5 1.5Z" fill="#bebebe"/><circle cx="8" cy="7" r="1.8" fill="#4f4f4f"/></svg>
<svg style="left:21px;top:408px" width="3" height="3"><path d="M3 0V3H0Z" fill="#c0c0c0"/></svg>
<svg style="left:7px;top:415px" width="16" height="16" viewBox="0 0 16 16"><path d="M4 8V3.5A1 1 0 0 1 6 3.500V2A1 1 0 0 1 8 2V1.800A1 1 0 0 1 10 2V3A1 1 0 0 1 12 3.200V9L13.500 7A1 1 0 0 1 15 8.200L12.500 13C12 14.500 11 15 9.500 15H7.500C6 15 5 14.500 4.300 13L2 8.500A1 1 0 0 1 4 8Z" fill="#bebebe"/></svg>
<svg style="left:8px;top:434px" width="15" height="15" viewBox="0 0 15 15"><circle cx="5.5" cy="5.5" r="4" fill="none" stroke="#bebebe" stroke-width="1.8"/><path d="M8.5 8.500L13 13" stroke="#bebebe" stroke-width="2.4" stroke-linecap="round"/></svg>
<div class="a" style="left:7px;top:458px;width:4px;height:4px;background:#e8e8e8"></div>
<div class="a" style="left:4px;top:455px;width:5px;height:5px;background:#111;border:1px solid #bbb"></div>
<svg style="left:17px;top:454px" width="8" height="8" viewBox="0 0 8 8"><path d="M2 1.500H5.500V6" fill="none" stroke="#bebebe" stroke-width="1"/><path d="M0 1.500L2.500 0V3ZM5.500 8L4 5.500H7Z" fill="#bebebe"/></svg>
<div class="a" style="left:12px;top:474px;width:13px;height:13px;background:#fff;border:1px solid #e0e0e0"></div>
<div class="a" style="left:4px;top:467px;width:13px;height:13px;background:#0a0a0a;border:1px solid #b4b4b4;box-shadow:0 0 0 1px #3a3a3a"></div>
<div class="a" style="left:8px;top:493px;width:14px;height:10px;border:1px solid #c8c8c8"></div>
<svg style="left:11px;top:495px" width="8" height="6" viewBox="0 0 8 6"><ellipse cx="4" cy="3" rx="3" ry="2.300" fill="none" stroke="#bdbdbd" stroke-width="0.9" stroke-dasharray="1.500 1"/></svg>
<div class="a" style="left:11px;top:513px;width:10px;height:7px;border:1px solid #c8c8c8;background:#5a5a5a"></div>
<div class="a" style="left:8px;top:516px;width:10px;height:7px;border:1px solid #c8c8c8;background:#6a6a6a"></div>
<svg style="left:21px;top:524px" width="3" height="3"><path d="M3 0V3H0Z" fill="#c0c0c0"/></svg>
<div class="a" id="panel"></div>
<div class="a" style="left:622px;top:129px;width:172px;height:9px;background:#3a3a3a"></div>
<svg style="left:776px;top:132px" width="6" height="5"><path d="M2.500 0V5L0 2.500ZM5.500 0V5L3 2.500Z" fill="#d8d8d8"/></svg>
<svg style="left:787px;top:132px" width="6" height="5"><path d="M0.500 0.500L5 4.500M5 0.500L0.500 4.500" stroke="#d8d8d8" stroke-width="1.200"/></svg>
<div class="a" style="left:622px;top:138px;width:172px;height:15px;background:#3c3c3c"></div>
<div class="a" style="left:624px;top:139px;width:26px;height:14px;background:#545454;border:1px solid #606060;border-bottom:none"></div>
<div class="a" style="left:651px;top:140px;width:26px;height:13px;background:#434343;border:1px solid #333;border-bottom:none"></div>
<div class="t" style="left:628px;top:141px">图层</div>
<div class="t" style="left:655px;top:141px;color:#c8c8c8">通道</div>
<svg style="left:783px;top:143px" width="10" height="7"><path d="M0 1L3 1L1.500 3ZM4 1H10M4 3.500H10M4 6H10" stroke="#c8c8c8" stroke-width="1" fill="#c8c8c8"/></svg>
<div class="a" style="left:622px;top:153px;width:172px;height:18px;background:#4f4f4f;border-bottom:1px solid #3e3e3e"></div>
<div class="a" style="left:625px;top:155px;width:50px;height:13px;background:#565656;border:1px solid #414141;border-radius:2px"></div>
<svg style="left:629px;top:158px" width="8" height="8"><circle cx="4.500" cy="3" r="2.300" fill="none" stroke="#b0b0b0" stroke-width="1"/><path d="M3 5L0.500 7.500" stroke="#b0b0b0" stroke-width="1.200"/></svg>
<div class="t" style="left:639px;top:156px;color:#d0d0d0">类型</div>
<svg style="left:668px;top:158px" width="6" height="9"><path d="M0.500 3.200H5.500L3 0.500ZM0.500 5.200H5.500L3 8Z" fill="#b8b8b8"/></svg>
<svg style="left:688px;top:157px" width="11" height="10"><rect x="0.500" y="0.500" width="10" height="9" fill="none" stroke="#8c8c8c"/><path d="M1 8L4 4L6 6.500L8 5L10 8Z" fill="#8c8c8c"/></svg>
<svg style="left:707px;top:156px" width="11" height="11"><circle cx="5.500" cy="5.500" r="4.500" fill="none" stroke="#8c8c8c" stroke-width="1.300"/><path d="M5.500 1A4.500 4.500 0 0 0 5.500 10Z" fill="#8c8c8c" transform="rotate(45 5.500 5.500)"/></svg>
<div class="t" style="left:727px;top:155px;font-size:12px;font-weight:bold;color:#8c8c8c;line-height:12px">T</div>
<svg style="left:744px;top:157px" width="10" height="10"><rect x="1" y="1" width="8" height="8" fill="none" stroke="#8c8c8c" stroke-width="1"/><rect x="0" y="0" width="2" height="2" fill="#8c8c8c"/><rect x="8" y="0" width="2" height="2" fill="#8c8c8c"/><rect x="0" y="8" width="2" height="2" fill="#8c8c8c"/><rect x="8" y="8" width="2" height="2" fill="#8c8c8c"/></svg>
<svg style="left:761px;top:156px" width="10" height="11"><rect x="1" y="5" width="8" height="5.500" fill="#8c8c8c"/><path d="M2.500 5V3.500A2.500 2.500 0 0 1 7.500 3.500V5" fill="none" stroke="#8c8c8c" stroke-width="1.200"/></svg>
<div class="a" style="left:785px;top:155px;width:7px;height:14px;background:#444;border:1px solid #3a3a3a;border-radius:1px"></div>
<div class="a" style="left:786px;top:156px;width:5px;height:5px;background:#6a6a6a"></div>
<div class="a" style="left:622px;top:171px;width:172px;height:21px;background:#4f4f4f;border-bottom:1px solid #3e3e3e"></div>
<div class="a" style="left:626px;top:175px;width:80px;height:13.5px;background:linear-gradient(#606060,#565656);border:1px solid #3a3a3a;border-radius:2px"></div>
<div class="t" style="left:631.5px;top:176px">正常</div>
<svg style="left:698px;top:178px" width="6" height="9"><path d="M0.500 3.200H5.500L3 0.500ZM0.500 5.200H5.500L3 8Z" fill="#d0d0d0"/></svg>
<div class="t" style="left:711px;top:176px">不透明度:</div>
<div class="a" style="left:753px;top:176px;width:24px;height:14px;background:#484848;border:1px solid #404040"></div>
<div class="t" style="left:755px;top:177px;color:#8a8a8a">100%</div>
<div class="a" style="left:778px;top:176px;width:15px;height:14px;background:#5e5e5e;border:1px solid #3e3e3e;border-radius:1px"></div>
<svg style="left:784px;top:181px" width="4" height="5"><path d="M0 0V5L3.500 2.500Z" fill="#c8c8c8"/></svg>
<div class="a" style="left:622px;top:192px;width:172px;height:20px;background:#4f4f4f;border-bottom:1px solid #3a3a3a"></div>
<div class="t" style="left:626px;top:197px">锁定:</div>
<svg style="left:654px;top:198px" width="10" height="10"><rect x="0.500" y="0.500" width="9" height="9" fill="none" stroke="#a0a0a0" stroke-dasharray="1 1"/><rect x="2.500" y="2.500" width="5" height="5" fill="#a0a0a0" opacity="0.700"/></svg>
<svg style="left:668px;top:197px" width="12" height="12"><path d="M11 1L5 7.500" stroke="#a0a0a0" stroke-width="1.500" stroke-linecap="round"/><path d="M5 7C3.500 7.500 3.500 9 1 10C3 11 5.500 10.500 6 8Z" fill="#a0a0a0"/></svg>
<svg style="left:686px;top:198px" width="11" height="11"><path d="M5.500 1V10M1 5.500H10" stroke="#a0a0a0" stroke-width="1"/><path d="M5.500 0L4 2H7ZM5.500 11L4 9H7ZM0 5.500L2 4V7ZM11 5.500L9 4V7Z" fill="#a0a0a0"/></svg>
<svg style="left:704px;top:197px" width="9" height="11"><rect x="0.500" y="5" width="8" height="5.500" fill="#a0a0a0"/><path d="M2 5V3.500A2.500 2.500 0 0 1 7 3.500V5" fill="none" stroke="#a0a0a0" stroke-width="1.200"/></svg>
<div class="t" style="left:729px;top:197px">填充:</div>
<div class="a" style="left:753px;top:197px;width:24px;height:14px;background:#484848;border:1px solid #404040"></div>
<div class="t" style="left:755px;top:198px;color:#8a8a8a">100%</div>
<div class="a" style="left:778px;top:197px;width:15px;height:14px;background:#5e5e5e;border:1px solid #3e3e3e;border-radius:1px"></div>
<svg style="left:784px;top:202px" width="4" height="5"><path d="M0 0V5L3.500 2.500Z" fill="#c8c8c8"/></svg>
<div class="a" style="left:622px;top:212px;width:172px;height:281px;background:#474747"></div>
<div class="a" style="left:622px;top:213px;width:22px;height:30px;background:#4d4d4d;border-right:1px solid #3c3c3c"></div>
<div class="a" style="left:645px;top:213px;width:140px;height:30px;background:#58657b"></div>
<div class="a" style="left:622px;top:243px;width:163px;height:1px;background:#3a3a3a"></div>
<svg style="left:628px;top:225px" width="12" height="8"><path d="M0.500 4C3 0.500 9 0.500 11.500 4C9 7.500 3 7.500 0.500 4Z" fill="#b4b4b4"/><circle cx="6" cy="4" r="2" fill="#444"/><circle cx="5.300" cy="3.300" r="0.700" fill="#ddd"/></svg>
<div class="a" style="left:647px;top:216px;width:24px;height:24px;background:#fff;border:1px solid #1e1e1e"></div>
<div class="t" style="left:679px;top:223px;font-style:italic">背景</div>
<svg style="left:765px;top:223px" width="9" height="11"><rect x="0.500" y="5" width="8" height="5.500" fill="none" stroke="#d0d0d0" stroke-width="1"/><path d="M2 5V3.500A2.500 2.500 0 0 1 7 3.500V5" fill="none" stroke="#d0d0d0" stroke-width="1.200"/><rect x="3.500" y="7" width="2" height="2" fill="#d0d0d0"/></svg>
<div class="a" style="left:785px;top:212px;width:9px;height:281px;background:#404040;border-left:1px solid #383838"></div>
<div class="a" style="left:622px;top:493px;width:172px;height:14px;background:#4f4f4f;border-top:1px solid #3a3a3a"></div>
<div class="a" style="left:622px;top:507px;width:172px;height:5px;background:#454545;border-top:1px solid #3c3c3c"></div>
<div class="a" style="left:700px;top:509px;width:15px;height:1px;background:#2e2e2e"></div>
<svg style="left:647px;top:497px" width="12" height="7"><rect x="0.700" y="1" width="6" height="5" rx="2.500" fill="none" stroke="#9a9a9a" stroke-width="1.200"/><rect x="5.300" y="1" width="6" height="5" rx="2.500" fill="none" stroke="#9a9a9a" stroke-width="1.200"/></svg>
<div class="t" style="left:668px;top:494px;font-family:'Liberation Serif',serif;font-style:italic;font-size:11px;color:#9a9a9a">fx</div>
<svg style="left:688px;top:497px" width="10" height="8"><rect x="0" y="0" width="10" height="8" fill="#bcbcbc"/><circle cx="5" cy="4" r="2.200" fill="#555"/></svg>
<svg style="left:707px;top:495px" width="12" height="11"><circle cx="5" cy="5" r="4.300" fill="none" stroke="#c4c4c4" stroke-width="1.300"/><path d="M5 0.700A4.300 4.300 0 0 0 5 9.300Z" fill="#c4c4c4" transform="rotate(45 5 5)"/><path d="M12 8V11H9Z" fill="#c4c4c4"/></svg>
<svg style="left:727px;top:496px" width="10" height="9"><path d="M0 1H4L5 2.500H10V9H0Z" fill="#b0b0b0"/></svg>
<svg style="left:746px;top:496px" width="10" height="10"><path d="M0.500 0.500H9.500V6L6 9.500H0.500Z" fill="#b0b0b0"/><path d="M9.500 6H6V9.500" fill="#666"/></svg>
<svg style="left:765px;top:495px" width="10" height="11"><path d="M0.500 2.500H9.500M3.500 2V0.700H6.500V2" fill="none" stroke="#9a9a9a" stroke-width="1"/><path d="M1.500 3.500H8.500V10.500H1.500Z" fill="none" stroke="#9a9a9a" stroke-width="1"/></svg>
<div class="a" style="left:31px;top:566px;width:36px;height:14px;background:#3c3c3c"></div>
<div class="a" style="left:67px;top:566px;width:141px;height:14px;background:#4e4e4e;border-left:1px solid #333;border-top:1px solid #3a3a3a"></div>
<div class="t" style="left:33px;top:567px">66.67%</div>
<svg style="left:70px;top:568px" width="10" height="10"><circle cx="5" cy="5" r="4.500" fill="#b0b0b0"/><path d="M5 2V5.500H7.500" fill="none" stroke="#4a4a4a" stroke-width="1.200"/></svg>
<div class="t" style="left:108px;top:567px">文档:1.83M/0 字节</div>
<svg style="left:209px;top:569px" width="6" height="8"><path d="M0.500 0.500V7.500L5.500 4Z" fill="#e0e0e0"/></svg>
<svg style="left:640px;top:500px" width="160" height="80" viewBox="640 500 160 80"><polygon points="669,538 800,511.5 800,580 660,580" fill="#ffffff"/><polygon points="660,580 800,514 800,580" fill="#3fa9e2"/><text x="739" y="554" font-family="Liberation Mono, monospace" font-size="16" fill="#eef8fe" stroke="#eef8fe" stroke-width="0.3" textLength="63" lengthAdjust="spacingAndGlyphs">jb51.net</text><text x="706" y="576" font-family="Noto Sans CJK SC, sans-serif" font-size="23.5" fill="#f2fafe" font-weight="400">脚本之家</text></svg>
</body></html>
